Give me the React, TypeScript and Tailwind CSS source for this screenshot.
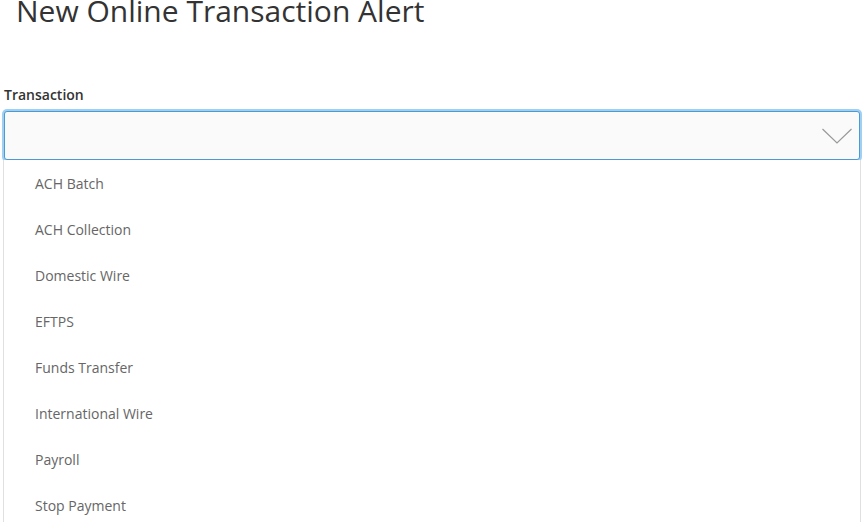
const options = [
  "ACH Batch",
  "ACH Collection",
  "Domestic Wire",
  "EFTPS",
  "Funds Transfer",
  "International Wire",
  "Payroll",
  "Stop Payment",
]

export default function App() {
  return (
    <main className="h-[522px] overflow-hidden bg-white font-['Open_Sans',sans-serif]">
      <h1 className="-mt-[9px] pl-[16px] text-[30px] leading-[40px] font-normal text-[#333]">
        New Online Transaction Alert
      </h1>

      <div className="mt-[55px] pl-[4px] pr-[6px]">
        <label className="block text-[14px] leading-[18px] font-semibold text-[#333]">Transaction</label>
        <div className="mt-[7px] flex h-[49px] items-center justify-end rounded-[3px] border border-[#4c9ad4] bg-[#fafafa] pr-[7px] ring-2 ring-[#9fd0f2]">
          <svg width="30" height="16" viewBox="0 0 30 16" fill="none">
            <polyline points="0.5,1 15,15 29.5,1" stroke="#999" strokeWidth="1.2" />
          </svg>
        </div>
        <ul className="-mx-px border-x border-[#e0e0e0] bg-white">
          {options.map((o) => (
            <li key={o} className="flex h-[46px] items-center pl-[31px] text-[14px] text-[#666]">
              {o}
            </li>
          ))}
        </ul>
      </div>
    </main>
  )
}
